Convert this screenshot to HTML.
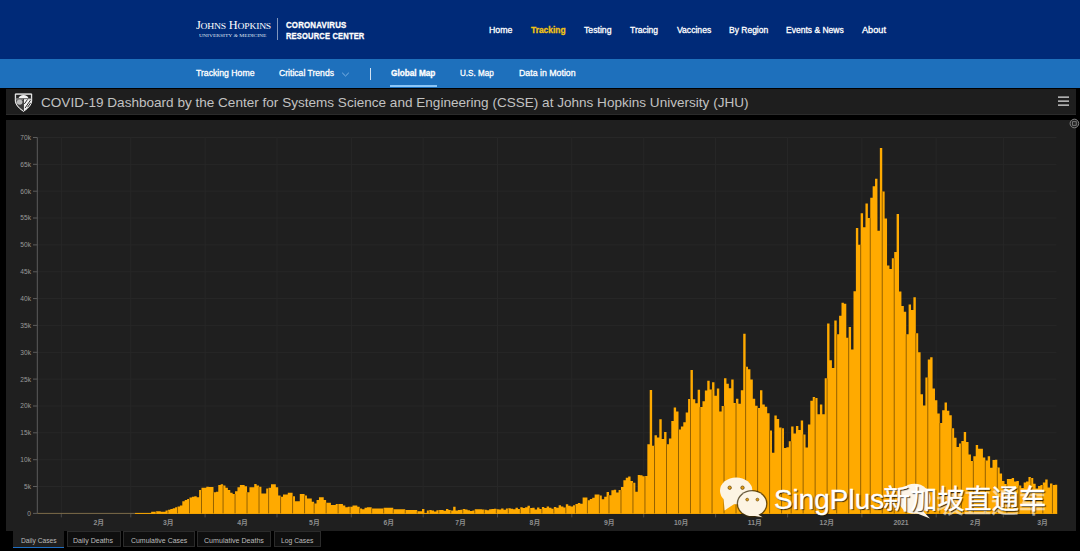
<!DOCTYPE html>
<html lang="en"><head><meta charset="utf-8"><title>COVID-19 Dashboard</title>
<style>
html,body{margin:0;padding:0;background:#000;}
body{width:1080px;height:551px;position:relative;overflow:hidden;font-family:"Liberation Sans",sans-serif;}
.hdr{position:absolute;left:0;top:0;width:1080px;height:59px;background:#002a78;}
.sub{position:absolute;left:0;top:59px;width:1080px;height:28.5px;background:#1e70bc;}
.tbar{position:absolute;left:6px;top:89.2px;width:1069.5px;height:25.5px;background:#1e1e1e;border-bottom:1.3px solid #2b2b2b;box-sizing:border-box;}
.panel{position:absolute;left:6px;top:120px;width:1069.5px;height:411px;background:#1f1f1f;}
.t{position:absolute;white-space:nowrap;transform-origin:0 50%;display:block;}
.chart{position:absolute;left:0;top:0;}
.yl{font-family:"Liberation Sans",sans-serif;font-size:6.6px;fill:#9a9a9a;}
.xl{font-family:"Liberation Sans","Noto Sans CJK SC",sans-serif;font-size:6.8px;fill:#8e8e8e;font-weight:bold}
.tab{position:absolute;top:531.3px;height:15.8px;background:#0f0f0f;border:1px solid #2b2b2b;box-sizing:border-box;}
.tab.act{top:531px;height:16.6px;background:#1f1f1f;border:none;border-bottom:1.8px solid #1f6fc4;}
.vdiv{position:absolute;background:#fff;}
.sc{display:inline-block;font-size:.78em;}
.sc::first-letter{font-size:1.282em;}
.wm{position:absolute;left:775px;top:479.5px;font-family:"Liberation Sans","Noto Sans CJK SC",sans-serif;font-size:26.6px;line-height:40px;color:#fff;white-space:nowrap;text-shadow:1px 1.2px 1px rgba(30,22,5,.95);-webkit-text-stroke:.35px #fff;transform-origin:0 50%;}
</style></head><body>
<div class="hdr"></div><div class="sub"></div>
<div class="vdiv" style="left:276.6px;top:17.5px;width:1px;height:22.5px;opacity:.5"></div>
<div class="vdiv" style="left:370px;top:67.5px;width:1px;height:12px;opacity:.8"></div>
<div style="position:absolute;left:389.8px;top:84.7px;width:46.8px;height:2.8px;background:#8cc6f7"></div>
<svg style="position:absolute;left:341px;top:71px" width="9" height="7" viewBox="0 0 9 7"><path d="M1.2 1.8 L4.5 5 L7.8 1.8" fill="none" stroke="#7fb4e6" stroke-width="1"/></svg>
<div class="tbar"></div><div class="panel"></div>
<svg style="position:absolute;left:13px;top:91.5px" width="21" height="21" viewBox="13 91.5 21 21">
<path d="M15.3 93.4 H31.7 V100.6 Q31.4 105.6 23.5 110.9 Q15.6 105.6 15.3 100.6 Z" fill="#dcdcdc" stroke="#f2f2f2" stroke-width="1"/>
<path d="M16.1 94.3 H30.9 V97.6 H16.1 Z" fill="#262626"/>
<path d="M18.6 97.6 Q19.5 94.6 23.5 94.4 Q27.5 94.6 28.4 97.6 Z" fill="#f4f4f4"/>
<path d="M15.8 98.3 H31.2" stroke="#1e1e1e" stroke-width=".7"/>
<path d="M16.2 98.9 H23 V109.8 Q16.6 105.6 16.2 100.8 Z" fill="#3a3a3a"/>
<ellipse cx="19.6" cy="101.6" rx="2.9" ry="2.7" fill="#bcbcbc"/>
<path d="M24 98.9 H30.8 V100.8 Q30.4 105.6 24 109.8 Z" fill="#f4f4f4"/>
<path d="M24.3 103.5 L27.5 99 M25 107.6 L30.5 99.6 M27.6 106.6 L30.6 102.4" stroke="#2a2a2a" stroke-width="1"/>
<path d="M23.5 98.4 V110.4" stroke="#1e1e1e" stroke-width=".8"/>
</svg>
<svg style="position:absolute;left:1057px;top:95px" width="14" height="12" viewBox="0 0 14 12"><path d="M1 2.2H12 M1 6.1H12 M1 10.1H12" stroke="#e0e0e0" stroke-width="1.3"/></svg>
<svg class="chart" width="1080" height="551" viewBox="0 0 1080 551">
<line x1="37.3" x2="1056.5" y1="513.4" y2="513.4" stroke="#272727" stroke-width="1"/>
<line x1="33" x2="37.3" y1="513.4" y2="513.4" stroke="#5c5c5c" stroke-width="1"/>
<line x1="37.3" x2="1056.5" y1="486.5" y2="486.5" stroke="#272727" stroke-width="1"/>
<line x1="33" x2="37.3" y1="486.5" y2="486.5" stroke="#5c5c5c" stroke-width="1"/>
<line x1="37.3" x2="1056.5" y1="459.7" y2="459.7" stroke="#272727" stroke-width="1"/>
<line x1="33" x2="37.3" y1="459.7" y2="459.7" stroke="#5c5c5c" stroke-width="1"/>
<line x1="37.3" x2="1056.5" y1="432.8" y2="432.8" stroke="#272727" stroke-width="1"/>
<line x1="33" x2="37.3" y1="432.8" y2="432.8" stroke="#5c5c5c" stroke-width="1"/>
<line x1="37.3" x2="1056.5" y1="406.0" y2="406.0" stroke="#272727" stroke-width="1"/>
<line x1="33" x2="37.3" y1="406.0" y2="406.0" stroke="#5c5c5c" stroke-width="1"/>
<line x1="37.3" x2="1056.5" y1="379.1" y2="379.1" stroke="#272727" stroke-width="1"/>
<line x1="33" x2="37.3" y1="379.1" y2="379.1" stroke="#5c5c5c" stroke-width="1"/>
<line x1="37.3" x2="1056.5" y1="352.3" y2="352.3" stroke="#272727" stroke-width="1"/>
<line x1="33" x2="37.3" y1="352.3" y2="352.3" stroke="#5c5c5c" stroke-width="1"/>
<line x1="37.3" x2="1056.5" y1="325.4" y2="325.4" stroke="#272727" stroke-width="1"/>
<line x1="33" x2="37.3" y1="325.4" y2="325.4" stroke="#5c5c5c" stroke-width="1"/>
<line x1="37.3" x2="1056.5" y1="298.6" y2="298.6" stroke="#272727" stroke-width="1"/>
<line x1="33" x2="37.3" y1="298.6" y2="298.6" stroke="#5c5c5c" stroke-width="1"/>
<line x1="37.3" x2="1056.5" y1="271.8" y2="271.8" stroke="#272727" stroke-width="1"/>
<line x1="33" x2="37.3" y1="271.8" y2="271.8" stroke="#5c5c5c" stroke-width="1"/>
<line x1="37.3" x2="1056.5" y1="244.9" y2="244.9" stroke="#272727" stroke-width="1"/>
<line x1="33" x2="37.3" y1="244.9" y2="244.9" stroke="#5c5c5c" stroke-width="1"/>
<line x1="37.3" x2="1056.5" y1="218.0" y2="218.0" stroke="#272727" stroke-width="1"/>
<line x1="33" x2="37.3" y1="218.0" y2="218.0" stroke="#5c5c5c" stroke-width="1"/>
<line x1="37.3" x2="1056.5" y1="191.2" y2="191.2" stroke="#272727" stroke-width="1"/>
<line x1="33" x2="37.3" y1="191.2" y2="191.2" stroke="#5c5c5c" stroke-width="1"/>
<line x1="37.3" x2="1056.5" y1="164.3" y2="164.3" stroke="#272727" stroke-width="1"/>
<line x1="33" x2="37.3" y1="164.3" y2="164.3" stroke="#5c5c5c" stroke-width="1"/>
<line x1="37.3" x2="1056.5" y1="137.5" y2="137.5" stroke="#272727" stroke-width="1"/>
<line x1="33" x2="37.3" y1="137.5" y2="137.5" stroke="#5c5c5c" stroke-width="1"/>
<line x1="61.3" x2="61.3" y1="137.5" y2="513.4" stroke="#272727" stroke-width="1"/>
<line x1="61.3" x2="61.3" y1="513.4" y2="517.4" stroke="#4a4a4a" stroke-width="1"/>
<line x1="130.8" x2="130.8" y1="137.5" y2="513.4" stroke="#272727" stroke-width="1"/>
<line x1="130.8" x2="130.8" y1="513.4" y2="517.4" stroke="#4a4a4a" stroke-width="1"/>
<line x1="205.1" x2="205.1" y1="137.5" y2="513.4" stroke="#272727" stroke-width="1"/>
<line x1="205.1" x2="205.1" y1="513.4" y2="517.4" stroke="#4a4a4a" stroke-width="1"/>
<line x1="277.0" x2="277.0" y1="137.5" y2="513.4" stroke="#272727" stroke-width="1"/>
<line x1="277.0" x2="277.0" y1="513.4" y2="517.4" stroke="#4a4a4a" stroke-width="1"/>
<line x1="351.3" x2="351.3" y1="137.5" y2="513.4" stroke="#272727" stroke-width="1"/>
<line x1="351.3" x2="351.3" y1="513.4" y2="517.4" stroke="#4a4a4a" stroke-width="1"/>
<line x1="423.2" x2="423.2" y1="137.5" y2="513.4" stroke="#272727" stroke-width="1"/>
<line x1="423.2" x2="423.2" y1="513.4" y2="517.4" stroke="#4a4a4a" stroke-width="1"/>
<line x1="497.5" x2="497.5" y1="137.5" y2="513.4" stroke="#272727" stroke-width="1"/>
<line x1="497.5" x2="497.5" y1="513.4" y2="517.4" stroke="#4a4a4a" stroke-width="1"/>
<line x1="571.8" x2="571.8" y1="137.5" y2="513.4" stroke="#272727" stroke-width="1"/>
<line x1="571.8" x2="571.8" y1="513.4" y2="517.4" stroke="#4a4a4a" stroke-width="1"/>
<line x1="643.7" x2="643.7" y1="137.5" y2="513.4" stroke="#272727" stroke-width="1"/>
<line x1="643.7" x2="643.7" y1="513.4" y2="517.4" stroke="#4a4a4a" stroke-width="1"/>
<line x1="715.6" x2="715.6" y1="137.5" y2="513.4" stroke="#272727" stroke-width="1"/>
<line x1="715.6" x2="715.6" y1="513.4" y2="517.4" stroke="#4a4a4a" stroke-width="1"/>
<line x1="787.6" x2="787.6" y1="137.5" y2="513.4" stroke="#272727" stroke-width="1"/>
<line x1="787.6" x2="787.6" y1="513.4" y2="517.4" stroke="#4a4a4a" stroke-width="1"/>
<line x1="861.9" x2="861.9" y1="137.5" y2="513.4" stroke="#272727" stroke-width="1"/>
<line x1="861.9" x2="861.9" y1="513.4" y2="517.4" stroke="#4a4a4a" stroke-width="1"/>
<line x1="936.2" x2="936.2" y1="137.5" y2="513.4" stroke="#272727" stroke-width="1"/>
<line x1="936.2" x2="936.2" y1="513.4" y2="517.4" stroke="#4a4a4a" stroke-width="1"/>
<line x1="1003.3" x2="1003.3" y1="137.5" y2="513.4" stroke="#272727" stroke-width="1"/>
<line x1="1003.3" x2="1003.3" y1="513.4" y2="517.4" stroke="#4a4a4a" stroke-width="1"/>
<line x1="37.3" x2="37.3" y1="137.5" y2="513.4" stroke="#5c5c5c" stroke-width="1"/>
<path d="M136.78 513.4V513.2H139.17V513.4ZM139.17 513.4V513.2H141.57V513.4ZM141.57 513.4V513.2H143.97V513.4ZM143.97 513.4V513.2H146.36V513.4ZM146.36 513.4V513.2H148.76V513.4ZM148.76 513.4V513.2H151.16V513.4ZM151.16 513.4V511.7H153.55V513.4ZM153.55 513.4V511.7H155.95V513.4ZM155.95 513.4V511.2H158.35V513.4ZM158.35 513.4V511.2H160.75V513.4ZM160.75 513.4V511.7H163.14V513.4ZM163.14 513.4V511.7H165.54V513.4ZM165.54 513.4V510.6H167.94V513.4ZM167.94 513.4V509.7H170.33V513.4ZM170.33 513.4V509.0H172.73V513.4ZM172.73 513.4V508.2H175.13V513.4ZM175.13 513.4V507.3H177.52V513.4ZM177.52 513.4V506.4H179.92V513.4ZM179.92 513.4V505.6H182.32V513.4ZM182.32 513.4V501.2H184.72V513.4ZM184.72 513.4V500.1H187.11V513.4ZM187.11 513.4V499.0H189.51V513.4ZM189.51 513.4V497.5H191.91V513.4ZM191.91 513.4V496.7H194.30V513.4ZM194.30 513.4V496.2H196.70V513.4ZM196.70 513.4V497.3H199.10V513.4ZM199.10 513.4V490.1H201.49V513.4ZM201.49 513.4V487.8H203.89V513.4ZM203.89 513.4V487.8H206.29V513.4ZM206.29 513.4V486.7H208.69V513.4ZM208.69 513.4V487.1H211.08V513.4ZM211.08 513.4V487.1H213.48V513.4ZM213.48 513.4V492.3H215.88V513.4ZM215.88 513.4V491.7H218.27V513.4ZM218.27 513.4V485.1H220.67V513.4ZM220.67 513.4V484.2H223.07V513.4ZM223.07 513.4V485.6H225.46V513.4ZM225.46 513.4V487.8H227.86V513.4ZM227.86 513.4V490.1H230.26V513.4ZM230.26 513.4V492.8H232.66V513.4ZM232.66 513.4V494.0H235.05V513.4ZM235.05 513.4V491.2H237.45V513.4ZM237.45 513.4V487.3H239.85V513.4ZM239.85 513.4V485.1H242.24V513.4ZM242.24 513.4V485.1H244.64V513.4ZM244.64 513.4V486.2H247.04V513.4ZM247.04 513.4V492.3H249.43V513.4ZM249.43 513.4V487.3H251.83V513.4ZM251.83 513.4V487.3H254.23V513.4ZM254.23 513.4V484.0H256.63V513.4ZM256.63 513.4V485.6H259.02V513.4ZM259.02 513.4V486.7H261.42V513.4ZM261.42 513.4V493.4H263.82V513.4ZM263.82 513.4V493.4H266.21V513.4ZM266.21 513.4V488.4H268.61V513.4ZM268.61 513.4V487.8H271.01V513.4ZM271.01 513.4V484.2H273.40V513.4ZM273.40 513.4V484.2H275.80V513.4ZM275.80 513.4V487.3H278.20V513.4ZM278.20 513.4V495.6H280.60V513.4ZM280.60 513.4V496.7H282.99V513.4ZM282.99 513.4V494.5H285.39V513.4ZM285.39 513.4V494.5H287.79V513.4ZM287.79 513.4V492.8H290.18V513.4ZM290.18 513.4V492.8H292.58V513.4ZM292.58 513.4V496.2H294.98V513.4ZM294.98 513.4V501.2H297.37V513.4ZM297.37 513.4V501.2H299.77V513.4ZM299.77 513.4V494.0H302.17V513.4ZM302.17 513.4V494.0H304.57V513.4ZM304.57 513.4V495.6H306.96V513.4ZM306.96 513.4V498.4H309.36V513.4ZM309.36 513.4V498.4H311.76V513.4ZM311.76 513.4V501.7H314.15V513.4ZM314.15 513.4V503.4H316.55V513.4ZM316.55 513.4V500.1H318.95V513.4ZM318.95 513.4V497.3H321.34V513.4ZM321.34 513.4V497.3H323.74V513.4ZM323.74 513.4V500.1H326.14V513.4ZM326.14 513.4V502.8H328.54V513.4ZM328.54 513.4V502.8H330.93V513.4ZM330.93 513.4V505.1H333.33V513.4ZM333.33 513.4V505.1H335.73V513.4ZM335.73 513.4V504.0H338.12V513.4ZM338.12 513.4V504.0H340.52V513.4ZM340.52 513.4V504.0H342.92V513.4ZM342.92 513.4V505.6H345.31V513.4ZM345.31 513.4V507.3H347.71V513.4ZM347.71 513.4V506.7H350.11V513.4ZM350.11 513.4V506.7H352.51V513.4ZM352.51 513.4V505.6H354.90V513.4ZM354.90 513.4V505.6H357.30V513.4ZM357.30 513.4V506.7H359.70V513.4ZM359.70 513.4V508.4H362.09V513.4ZM362.09 513.4V509.3H364.49V513.4ZM364.49 513.4V507.8H366.89V513.4ZM366.89 513.4V507.3H369.28V513.4ZM369.28 513.4V507.3H371.68V513.4ZM371.68 513.4V508.4H374.08V513.4ZM374.08 513.4V508.4H376.48V513.4ZM376.48 513.4V508.4H378.87V513.4ZM378.87 513.4V508.4H381.27V513.4ZM381.27 513.4V508.4H383.67V513.4ZM383.67 513.4V507.8H386.06V513.4ZM386.06 513.4V507.8H388.46V513.4ZM388.46 513.4V507.8H390.86V513.4ZM390.86 513.4V507.8H393.25V513.4ZM393.25 513.4V509.3H395.65V513.4ZM395.65 513.4V509.3H398.05V513.4ZM398.05 513.4V509.3H400.45V513.4ZM400.45 513.4V509.3H402.84V513.4ZM402.84 513.4V509.3H405.24V513.4ZM405.24 513.4V510.1H407.64V513.4ZM407.64 513.4V510.1H410.03V513.4ZM410.03 513.4V510.1H412.43V513.4ZM412.43 513.4V510.1H414.83V513.4ZM414.83 513.4V510.1H417.22V513.4ZM417.22 513.4V511.2H419.62V513.4ZM419.62 513.4V511.2H422.02V513.4ZM422.02 513.4V508.9H424.42V513.4ZM426.81 513.4V510.5H429.21V513.4ZM429.21 513.4V510.0H431.61V513.4ZM431.61 513.4V510.6H434.00V513.4ZM434.00 513.4V511.5H436.40V513.4ZM436.40 513.4V510.3H438.80V513.4ZM438.80 513.4V510.0H441.19V513.4ZM441.19 513.4V510.0H443.59V513.4ZM443.59 513.4V510.7H445.99V513.4ZM445.99 513.4V509.0H448.39V513.4ZM448.39 513.4V509.9H450.78V513.4ZM450.78 513.4V510.6H453.18V513.4ZM453.18 513.4V506.7H455.58V513.4ZM455.58 513.4V510.5H457.97V513.4ZM457.97 513.4V510.0H460.37V513.4ZM460.37 513.4V509.7H462.77V513.4ZM462.77 513.4V509.0H465.16V513.4ZM465.16 513.4V509.5H467.56V513.4ZM467.56 513.4V510.3H469.96V513.4ZM469.96 513.4V511.0H472.36V513.4ZM472.36 513.4V510.4H474.75V513.4ZM474.75 513.4V509.3H477.15V513.4ZM477.15 513.4V509.3H479.55V513.4ZM479.55 513.4V509.3H481.94V513.4ZM481.94 513.4V509.4H484.34V513.4ZM484.34 513.4V509.7H486.74V513.4ZM486.74 513.4V510.3H489.13V513.4ZM489.13 513.4V509.3H491.53V513.4ZM491.53 513.4V508.9H493.93V513.4ZM493.93 513.4V508.7H496.33V513.4ZM496.33 513.4V509.3H498.72V513.4ZM498.72 513.4V509.4H501.12V513.4ZM501.12 513.4V508.4H503.52V513.4ZM503.52 513.4V509.8H505.91V513.4ZM505.91 513.4V508.6H508.31V513.4ZM508.31 513.4V508.3H510.71V513.4ZM510.71 513.4V508.7H513.10V513.4ZM513.10 513.4V509.3H515.50V513.4ZM515.50 513.4V507.7H517.90V513.4ZM517.90 513.4V509.0H520.30V513.4ZM520.30 513.4V507.2H522.69V513.4ZM522.69 513.4V508.0H525.09V513.4ZM525.09 513.4V507.3H527.49V513.4ZM527.49 513.4V505.7H529.88V513.4ZM529.88 513.4V508.0H532.28V513.4ZM532.28 513.4V507.8H534.68V513.4ZM534.68 513.4V509.6H537.07V513.4ZM537.07 513.4V507.6H539.47V513.4ZM539.47 513.4V509.0H541.87V513.4ZM541.87 513.4V507.1H544.27V513.4ZM544.27 513.4V507.9H546.66V513.4ZM546.66 513.4V506.5H549.06V513.4ZM549.06 513.4V507.8H551.46V513.4ZM551.46 513.4V508.8H553.85V513.4ZM553.85 513.4V507.0H556.25V513.4ZM556.25 513.4V507.8H558.65V513.4ZM558.65 513.4V505.2H561.04V513.4ZM561.04 513.4V506.5H563.44V513.4ZM563.44 513.4V507.5H565.84V513.4ZM565.84 513.4V504.2H568.24V513.4ZM568.24 513.4V505.8H570.63V513.4ZM570.63 513.4V506.4H573.03V513.4ZM573.03 513.4V505.3H575.43V513.4ZM575.43 513.4V504.1H577.82V513.4ZM577.82 513.4V503.0H580.22V513.4ZM580.22 513.4V503.7H582.62V513.4ZM582.62 513.4V497.4H585.01V513.4ZM585.01 513.4V497.6H587.41V513.4ZM587.41 513.4V500.2H589.81V513.4ZM589.81 513.4V499.1H592.21V513.4ZM592.21 513.4V497.7H594.60V513.4ZM594.60 513.4V494.4H597.00V513.4ZM597.00 513.4V494.6H599.40V513.4ZM599.40 513.4V495.5H601.79V513.4ZM601.79 513.4V499.3H604.19V513.4ZM604.19 513.4V496.7H606.59V513.4ZM606.59 513.4V492.0H608.98V513.4ZM608.98 513.4V495.2H611.38V513.4ZM611.38 513.4V490.2H613.78V513.4ZM613.78 513.4V489.7H616.18V513.4ZM616.18 513.4V492.5H618.57V513.4ZM618.57 513.4V489.9H620.97V513.4ZM620.97 513.4V486.9H623.37V513.4ZM623.37 513.4V480.2H625.76V513.4ZM625.76 513.4V477.8H628.16V513.4ZM628.16 513.4V476.5H630.56V513.4ZM630.56 513.4V481.0H632.95V513.4ZM632.95 513.4V482.8H635.35V513.4ZM635.35 513.4V491.7H637.75V513.4ZM637.75 513.4V475.0H640.15V513.4ZM640.15 513.4V475.2H642.54V513.4ZM642.54 513.4V476.3H644.94V513.4ZM644.94 513.4V476.0H647.34V513.4ZM647.34 513.4V444.3H649.73V513.4ZM649.73 513.4V390.1H652.13V513.4ZM652.13 513.4V445.8H654.53V513.4ZM654.53 513.4V435.3H656.92V513.4ZM656.92 513.4V437.4H659.32V513.4ZM659.32 513.4V419.2H661.72V513.4ZM661.72 513.4V439.0H664.12V513.4ZM664.12 513.4V432.0H666.51V513.4ZM666.51 513.4V444.3H668.91V513.4ZM668.91 513.4V438.4H671.31V513.4ZM671.31 513.4V420.9H673.70V513.4ZM673.70 513.4V407.5H676.10V513.4ZM676.10 513.4V411.5H678.50V513.4ZM678.50 513.4V429.4H680.89V513.4ZM680.89 513.4V426.6H683.29V513.4ZM683.29 513.4V422.2H685.69V513.4ZM685.69 513.4V412.4H688.09V513.4ZM688.09 513.4V398.9H690.48V513.4ZM690.48 513.4V370.1H692.88V513.4ZM692.88 513.4V399.3H695.28V513.4ZM695.28 513.4V403.2H697.67V513.4ZM697.67 513.4V389.8H700.07V513.4ZM700.07 513.4V407.1H702.47V513.4ZM702.47 513.4V401.2H704.86V513.4ZM704.86 513.4V390.5H707.26V513.4ZM707.26 513.4V380.8H709.66V513.4ZM709.66 513.4V389.5H712.06V513.4ZM712.06 513.4V382.3H714.45V513.4ZM714.45 513.4V395.7H716.85V513.4ZM716.85 513.4V388.5H719.25V513.4ZM719.25 513.4V411.6H721.64V513.4ZM721.64 513.4V405.9H724.04V513.4ZM724.04 513.4V378.2H726.44V513.4ZM726.44 513.4V383.8H728.83V513.4ZM728.83 513.4V388.3H731.23V513.4ZM731.23 513.4V379.4H733.63V513.4ZM733.63 513.4V402.9H736.03V513.4ZM736.03 513.4V398.8H738.42V513.4ZM738.42 513.4V403.8H740.82V513.4ZM740.82 513.4V390.2H743.22V513.4ZM743.22 513.4V333.7H745.61V513.4ZM745.61 513.4V366.8H748.01V513.4ZM748.01 513.4V369.2H750.41V513.4ZM750.41 513.4V379.4H752.80V513.4ZM752.80 513.4V398.7H755.20V513.4ZM755.20 513.4V405.7H757.60V513.4ZM757.60 513.4V408.1H760.00V513.4ZM760.00 513.4V390.3H762.39V513.4ZM762.39 513.4V404.6H764.79V513.4ZM764.79 513.4V406.7H767.19V513.4ZM767.19 513.4V413.2H769.58V513.4ZM769.58 513.4V430.4H771.98V513.4ZM771.98 513.4V452.7H774.38V513.4ZM774.38 513.4V415.6H776.77V513.4ZM776.77 513.4V419.1H779.17V513.4ZM779.17 513.4V427.4H781.57V513.4ZM781.57 513.4V428.2H783.97V513.4ZM783.97 513.4V448.1H786.36V513.4ZM786.36 513.4V447.2H788.76V513.4ZM788.76 513.4V441.3H791.16V513.4ZM791.16 513.4V426.6H793.55V513.4ZM793.55 513.4V433.5H795.95V513.4ZM795.95 513.4V425.9H798.35V513.4ZM798.35 513.4V430.0H800.74V513.4ZM800.74 513.4V420.6H803.14V513.4ZM803.14 513.4V434.4H805.54V513.4ZM805.54 513.4V447.4H807.94V513.4ZM807.94 513.4V424.4H810.33V513.4ZM810.33 513.4V400.8H812.73V513.4ZM812.73 513.4V397.0H815.13V513.4ZM815.13 513.4V397.9H817.52V513.4ZM817.52 513.4V414.3H819.92V513.4ZM819.92 513.4V404.6H822.32V513.4ZM822.32 513.4V414.3H824.71V513.4ZM824.71 513.4V378.3H827.11V513.4ZM827.11 513.4V323.4H829.51V513.4ZM829.51 513.4V360.3H831.91V513.4ZM831.91 513.4V368.1H834.30V513.4ZM834.30 513.4V320.5H836.70V513.4ZM836.70 513.4V334.2H839.10V513.4ZM839.10 513.4V315.8H841.49V513.4ZM841.49 513.4V302.7H843.89V513.4ZM843.89 513.4V303.8H846.29V513.4ZM846.29 513.4V337.7H848.68V513.4ZM848.68 513.4V327.1H851.08V513.4ZM851.08 513.4V349.6H853.48V513.4ZM853.48 513.4V291.2H855.88V513.4ZM855.88 513.4V228.1H858.27V513.4ZM858.27 513.4V244.8H860.67V513.4ZM860.67 513.4V213.3H863.07V513.4ZM863.07 513.4V227.3H865.46V513.4ZM865.46 513.4V203.4H867.86V513.4ZM867.86 513.4V218.1H870.26V513.4ZM870.26 513.4V197.7H872.65V513.4ZM872.65 513.4V186.3H875.05V513.4ZM875.05 513.4V178.7H877.45V513.4ZM877.45 513.4V230.8H879.85V513.4ZM879.85 513.4V148.0H882.24V513.4ZM882.24 513.4V191.5H884.64V513.4ZM884.64 513.4V218.4H887.04V513.4ZM887.04 513.4V265.5H889.43V513.4ZM889.43 513.4V268.9H891.83V513.4ZM891.83 513.4V258.2H894.23V513.4ZM894.23 513.4V252.0H896.62V513.4ZM896.62 513.4V214.0H899.02V513.4ZM899.02 513.4V291.4H901.42V513.4ZM901.42 513.4V306.1H903.82V513.4ZM903.82 513.4V311.8H906.21V513.4ZM906.21 513.4V334.3H908.61V513.4ZM908.61 513.4V304.5H911.01V513.4ZM911.01 513.4V309.9H913.40V513.4ZM913.40 513.4V297.2H915.80V513.4ZM915.80 513.4V333.2H918.20V513.4ZM918.20 513.4V352.3H920.59V513.4ZM920.59 513.4V394.2H922.99V513.4ZM922.99 513.4V405.5H925.39V513.4ZM925.39 513.4V377.5H927.79V513.4ZM927.79 513.4V359.4H930.18V513.4ZM930.18 513.4V357.2H932.58V513.4ZM932.58 513.4V388.4H934.98V513.4ZM934.98 513.4V400.2H937.37V513.4ZM937.37 513.4V413.5H939.77V513.4ZM939.77 513.4V423.0H942.17V513.4ZM942.17 513.4V410.3H944.56V513.4ZM944.56 513.4V402.6H946.96V513.4ZM946.96 513.4V410.8H949.36V513.4ZM949.36 513.4V415.3H951.76V513.4ZM951.76 513.4V428.3H954.15V513.4ZM954.15 513.4V437.7H956.55V513.4ZM956.55 513.4V447.0H958.95V513.4ZM958.95 513.4V443.5H961.34V513.4ZM961.34 513.4V440.9H963.74V513.4ZM963.74 513.4V432.1H966.14V513.4ZM966.14 513.4V441.9H968.53V513.4ZM968.53 513.4V454.5H970.93V513.4ZM970.93 513.4V461.0H973.33V513.4ZM973.33 513.4V456.3H975.73V513.4ZM975.73 513.4V445.1H978.12V513.4ZM978.12 513.4V448.7H980.52V513.4ZM980.52 513.4V448.8H982.92V513.4ZM982.92 513.4V457.5H985.31V513.4ZM985.31 513.4V460.6H987.71V513.4ZM987.71 513.4V456.3H990.11V513.4ZM990.11 513.4V467.8H992.50V513.4ZM992.50 513.4V460.0H994.90V513.4ZM994.90 513.4V459.8H997.30V513.4ZM997.30 513.4V467.6H999.70V513.4ZM999.70 513.4V473.5H1002.09V513.4ZM1002.09 513.4V481.0H1004.49V513.4ZM1004.49 513.4V484.1H1006.89V513.4ZM1006.89 513.4V479.1H1009.28V513.4ZM1009.28 513.4V479.1H1011.68V513.4ZM1011.68 513.4V478.1H1014.08V513.4ZM1014.08 513.4V481.5H1016.47V513.4ZM1016.47 513.4V481.0H1018.87V513.4ZM1018.87 513.4V485.6H1021.27V513.4ZM1021.27 513.4V488.1H1023.67V513.4ZM1023.67 513.4V482.4H1026.06V513.4ZM1026.06 513.4V481.6H1028.46V513.4ZM1028.46 513.4V477.1H1030.86V513.4ZM1030.86 513.4V477.9H1033.25V513.4ZM1033.25 513.4V483.7H1035.65V513.4ZM1035.65 513.4V488.6H1038.05V513.4ZM1038.05 513.4V486.1H1040.44V513.4ZM1040.44 513.4V485.0H1042.84V513.4ZM1042.84 513.4V482.5H1045.24V513.4ZM1045.24 513.4V479.6H1047.64V513.4ZM1047.64 513.4V487.6H1050.03V513.4ZM1050.03 513.4V483.4H1052.43V513.4ZM1052.43 513.4V484.9H1054.83V513.4ZM1054.83 513.4V484.7H1057.22V513.4Z" fill="#ffaa00"/>
<line x1="37.3" x2="135" y1="513.4" y2="513.4" stroke="#7c6b48" stroke-width="1"/>
<line x1="135" x2="1057.2" y1="513.4" y2="513.4" stroke="#ffaa00" stroke-width="1"/>
<path d="M155.95 513.4V511.7M167.94 513.4V510.6M177.52 513.4V507.3M189.51 513.4V499.0M201.49 513.4V490.1M213.48 513.4V492.3M223.07 513.4V485.6M235.05 513.4V494.0M247.04 513.4V492.3M259.02 513.4V486.7M268.61 513.4V488.4M280.60 513.4V496.7M292.58 513.4V496.2M304.57 513.4V495.6M314.15 513.4V503.4M326.14 513.4V502.8M338.12 513.4V504.0M350.11 513.4V506.7M359.70 513.4V508.4M371.68 513.4V508.4M383.67 513.4V508.4M393.25 513.4V509.3M405.24 513.4V510.1M417.22 513.4V511.2M429.21 513.4V510.5M438.80 513.4V510.3M450.78 513.4V510.6M462.77 513.4V509.7M474.75 513.4V510.4M484.34 513.4V509.7M496.33 513.4V509.3M508.31 513.4V508.6M520.30 513.4V509.0M529.88 513.4V508.0M541.87 513.4V509.0M553.85 513.4V508.8M565.84 513.4V507.5M575.43 513.4V505.3M587.41 513.4V500.2M599.40 513.4V495.5M608.98 513.4V495.2M620.97 513.4V489.9M632.95 513.4V482.8M644.94 513.4V476.3M654.53 513.4V445.8M666.51 513.4V444.3M678.50 513.4V429.4M690.48 513.4V398.9M700.07 513.4V407.1M712.06 513.4V389.5M724.04 513.4V405.9M736.03 513.4V402.9M745.61 513.4V366.8M757.60 513.4V408.1M769.58 513.4V430.4M781.57 513.4V428.2M791.16 513.4V441.3M803.14 513.4V434.4M815.13 513.4V397.9M827.11 513.4V378.3M836.70 513.4V334.2M848.68 513.4V337.7M860.67 513.4V244.8M870.26 513.4V218.1M882.24 513.4V191.5M894.23 513.4V258.2M906.21 513.4V334.3M915.80 513.4V333.2M927.79 513.4V377.5M939.77 513.4V423.0M951.76 513.4V428.3M961.34 513.4V443.5M973.33 513.4V461.0M985.31 513.4V460.6M997.30 513.4V467.6M1006.89 513.4V484.1M1018.87 513.4V485.6M1030.86 513.4V477.9M1042.84 513.4V485.0M1052.43 513.4V484.9" stroke="#241600" stroke-opacity="0.9" stroke-width="0.55" fill="none"/>
<text x="31" y="515.8" text-anchor="end" class="yl">0</text>
<text x="31" y="488.9" text-anchor="end" class="yl">5k</text>
<text x="31" y="462.1" text-anchor="end" class="yl">10k</text>
<text x="31" y="435.2" text-anchor="end" class="yl">15k</text>
<text x="31" y="408.4" text-anchor="end" class="yl">20k</text>
<text x="31" y="381.5" text-anchor="end" class="yl">25k</text>
<text x="31" y="354.7" text-anchor="end" class="yl">30k</text>
<text x="31" y="327.8" text-anchor="end" class="yl">35k</text>
<text x="31" y="301.0" text-anchor="end" class="yl">40k</text>
<text x="31" y="274.1" text-anchor="end" class="yl">45k</text>
<text x="31" y="247.3" text-anchor="end" class="yl">50k</text>
<text x="31" y="220.4" text-anchor="end" class="yl">55k</text>
<text x="31" y="193.6" text-anchor="end" class="yl">60k</text>
<text x="31" y="166.7" text-anchor="end" class="yl">65k</text>
<text x="31" y="139.9" text-anchor="end" class="yl">70k</text>
<text x="98.7" y="525" text-anchor="middle" class="xl">2月</text>
<text x="168.2" y="525" text-anchor="middle" class="xl">3月</text>
<text x="242.5" y="525" text-anchor="middle" class="xl">4月</text>
<text x="314.4" y="525" text-anchor="middle" class="xl">5月</text>
<text x="388.7" y="525" text-anchor="middle" class="xl">6月</text>
<text x="460.6" y="525" text-anchor="middle" class="xl">7月</text>
<text x="534.9" y="525" text-anchor="middle" class="xl">8月</text>
<text x="609.2" y="525" text-anchor="middle" class="xl">9月</text>
<text x="681.1" y="525" text-anchor="middle" class="xl">10月</text>
<text x="754.8" y="525" text-anchor="middle" class="xl">11月</text>
<text x="826.8" y="525" text-anchor="middle" class="xl">12月</text>
<text x="901.1" y="525" text-anchor="middle" class="xl">2021</text>
<text x="975.4" y="525" text-anchor="middle" class="xl">2月</text>
<text x="1042.5" y="525" text-anchor="middle" class="xl">3月</text>
</svg>
<svg style="position:absolute;left:1068px;top:116.5px" width="12" height="13" viewBox="0 0 12 13"><circle cx="6.4" cy="6.5" r="4.3" fill="#222" stroke="#8a8a8a" stroke-width="0.9"/><rect x="4.6" y="4.7" width="3.6" height="3.6" fill="none" stroke="#8a8a8a" stroke-width="0.8"/></svg>
<div class="tab act" style="left:13.2px;width:50.7px"></div><div class="tab" style="left:66.7px;width:54.5px"></div><div class="tab" style="left:123.4px;width:71.8px"></div><div class="tab" style="left:197.4px;width:74.0px"></div><div class="tab" style="left:274px;width:46.5px"></div>
<span id="lg1" class="t" style="left:195.5px;top:19.32px;font-size:11.8px;line-height:13.57px;transform:scaleX(1.0467);font-family:'Liberation Serif',serif;color:#fff;letter-spacing:-0.2px"><span class="sc">JOHNS</span> <span class="sc">HOPKINS</span></span><span id="lg2" class="t" style="left:198.5px;top:33.44px;font-size:4.6px;line-height:5.29px;transform:scaleX(1.2111);font-family:'Liberation Serif',serif;color:#dfe6f2;">UNIVERSITY <i>&amp;</i> MEDICINE</span><span id="crc1" class="t" style="left:285.5px;top:19.73px;font-size:8.7px;line-height:10.00px;transform:scaleX(0.9068);font-weight:bold;color:#fff;letter-spacing:.2px;-webkit-text-stroke:.3px #fff">CORONAVIRUS</span><span id="crc2" class="t" style="left:285.5px;top:31.43px;font-size:8.7px;line-height:10.00px;transform:scaleX(0.8686);font-weight:bold;color:#fff;letter-spacing:.2px;-webkit-text-stroke:.3px #fff">RESOURCE CENTER</span><span id="n0" class="t" style="left:488.6px;top:25.34px;font-size:8.8px;line-height:10.12px;transform:scaleX(0.9971);color:#fff;-webkit-text-stroke:.3px currentColor;">Home</span><span id="n1" class="t" style="left:530.9px;top:25.34px;font-size:8.8px;line-height:10.12px;transform:scaleX(0.9561);color:#fff;-webkit-text-stroke:.3px currentColor;font-weight:bold;color:#f2c413">Tracking</span><span id="n2" class="t" style="left:584.3px;top:25.34px;font-size:8.8px;line-height:10.12px;transform:scaleX(0.9865);color:#fff;-webkit-text-stroke:.3px currentColor;">Testing</span><span id="n3" class="t" style="left:630.1px;top:25.34px;font-size:8.8px;line-height:10.12px;transform:scaleX(0.9684);color:#fff;-webkit-text-stroke:.3px currentColor;">Tracing</span><span id="n4" class="t" style="left:676.5px;top:25.34px;font-size:8.8px;line-height:10.12px;transform:scaleX(0.9758);color:#fff;-webkit-text-stroke:.3px currentColor;">Vaccines</span><span id="n5" class="t" style="left:729px;top:25.34px;font-size:8.8px;line-height:10.12px;transform:scaleX(0.9657);color:#fff;-webkit-text-stroke:.3px currentColor;">By Region</span><span id="n6" class="t" style="left:786px;top:25.34px;font-size:8.8px;line-height:10.12px;transform:scaleX(0.9672);color:#fff;-webkit-text-stroke:.3px currentColor;">Events &amp; News</span><span id="n7" class="t" style="left:861.9px;top:25.34px;font-size:8.8px;line-height:10.12px;transform:scaleX(1.0435);color:#fff;-webkit-text-stroke:.3px currentColor;">About</span><span id="s0" class="t" style="left:196px;top:69.22px;font-size:8.6px;line-height:9.89px;transform:scaleX(1.0094);color:#fff;-webkit-text-stroke:.3px currentColor;">Tracking Home</span><span id="s1" class="t" style="left:279px;top:69.22px;font-size:8.6px;line-height:9.89px;transform:scaleX(1.0014);color:#fff;-webkit-text-stroke:.3px currentColor;">Critical Trends</span><span id="s2" class="t" style="left:390.6px;top:69.22px;font-size:8.6px;line-height:9.89px;transform:scaleX(0.9584);color:#fff;-webkit-text-stroke:.3px currentColor;font-weight:bold">Global Map</span><span id="s3" class="t" style="left:459.8px;top:69.22px;font-size:8.6px;line-height:9.89px;transform:scaleX(0.9434);color:#fff;-webkit-text-stroke:.3px currentColor;">U.S. Map</span><span id="s4" class="t" style="left:518.9px;top:69.22px;font-size:8.6px;line-height:9.89px;transform:scaleX(1.0213);color:#fff;-webkit-text-stroke:.3px currentColor;">Data in Motion</span><span id="ttl" class="t" style="left:40.7px;top:94.79px;font-size:13.6px;line-height:15.64px;transform:scaleX(0.9973);color:#c2c2c2">COVID-19 Dashboard by the Center for Systems Science and Engineering (CSSE) at Johns Hopkins University (JHU)</span><span id="tb0" class="t" style="left:20.5px;top:536.50px;font-size:7.4px;line-height:8.51px;transform:scaleX(0.9002);color:#bdbdbd">Daily Cases</span><span id="tb1" class="t" style="left:73.4px;top:536.50px;font-size:7.4px;line-height:8.51px;transform:scaleX(0.9545);color:#bdbdbd">Daily Deaths</span><span id="tb2" class="t" style="left:130.7px;top:536.50px;font-size:7.4px;line-height:8.51px;transform:scaleX(0.9386);color:#bdbdbd">Cumulative Cases</span><span id="tb3" class="t" style="left:204px;top:536.50px;font-size:7.4px;line-height:8.51px;transform:scaleX(0.9591);color:#bdbdbd">Cumulative Deaths</span><span id="tb4" class="t" style="left:281.2px;top:536.50px;font-size:7.4px;line-height:8.51px;transform:scaleX(0.9167);color:#bdbdbd">Log Cases</span>
<!-- watermark -->
<svg style="position:absolute;left:700px;top:465px" width="380" height="70" viewBox="700 465 380 70">
 <g opacity="1">
 <ellipse cx="914.5" cy="498.8" rx="16" ry="15" fill="#fdf5e8"/><path d="M922 510 L930 518.5 L916 513Z" fill="#fdf5e8"/>
 </g>
 <g>
 <ellipse cx="736.2" cy="490.8" rx="16.2" ry="13.4" fill="#fdf4e3"/><path d="M723.5 498.5 L724.6 510.4 L735 503.5Z" fill="#fdf4e3"/>
 <ellipse cx="752.1" cy="503.7" rx="15.4" ry="13.7" fill="#3a2a08" opacity=".75"/>
 <path d="M757 513 L764.5 518.4 L751 516.2Z" fill="#3a2a08" opacity=".7"/>
 <ellipse cx="752.1" cy="503.7" rx="14.1" ry="12.4" fill="#fdf4e3"/><path d="M756.5 513.5 L762.5 517.2 L752 515.6Z" fill="#fdf4e3"/>
 <circle cx="729.7" cy="487.7" r="1.7" fill="#e8a010" stroke="#6b4a10" stroke-width=".8"/><circle cx="742.5" cy="487.7" r="1.7" fill="#e8a010" stroke="#6b4a10" stroke-width=".8"/>
 <circle cx="747.2" cy="499.6" r="1.4" fill="#e8a010" stroke="#6b4a10" stroke-width=".7"/><circle cx="757.4" cy="499.6" r="1.4" fill="#e8a010" stroke="#6b4a10" stroke-width=".7"/>
 </g>
</svg>
<div class="wm" id="wm2" style="left:936.5px;top:483.6px;font-size:27.4px;opacity:.55;text-shadow:none">坡直通车</div>
<div class="wm" id="wml" style="left:773.6px;top:478.6px;font-size:28.2px;transform:scaleX(0.99)">SingPlus</div>
<div class="wm" id="wmc" style="left:883px;top:480px;font-size:27.2px">新加坡直通车</div>
</body></html>
